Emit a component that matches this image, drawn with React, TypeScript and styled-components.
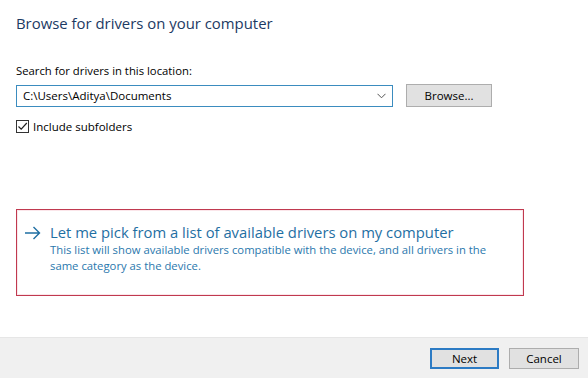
import React from "react";
import styled, { createGlobalStyle } from "styled-components";

const GlobalStyle = createGlobalStyle`
  html, body {
    margin: 0;
    padding: 0;
    background: #fff;
  }
  body {
    font-family: "Open Sans", "Noto Sans", sans-serif;
  }
`;

const Window = styled.div`
  width: 588px;
  height: 378px;
  display: flex;
  flex-direction: column;
  background: #fff;
  overflow: hidden;
`;

const Body = styled.div`
  flex: 1;
  display: flex;
  flex-direction: column;
  padding: 12px 16px 0 16px;
`;

const Title = styled.h1`
  margin: 0;
  font-size: 14.9px;
  font-weight: 400;
  color: #1c3a63;
  line-height: 22px;
`;

const Label = styled.div`
  margin-top: 29px;
  font-size: 11.3px;
  color: #000;
  line-height: 16px;
`;

const PathRow = styled.div`
  display: flex;
  align-items: center;
  gap: 13px;
  margin-top: 5px;
`;

const Combo = styled.div`
  width: 377px;
  height: 22px;
  box-sizing: border-box;
  border: 1px solid #3b8cbf;
  display: flex;
  align-items: center;
  justify-content: space-between;
  padding: 0 6px 0 6px;
  font-size: 11.5px;
  color: #000;
`;

const Button = styled.button<{ $focused?: boolean }>`
  width: ${(p) => (p.$focused ? "69px" : "70px")};
  height: 21px;
  box-sizing: border-box;
  border: ${(p) => (p.$focused ? "2px solid #2c7bc4" : "1px solid #adadad")};
  background: #e1e1e1;
  font-family: inherit;
  font-size: 11.5px;
  color: #000;
  padding: 0;
`;

const BrowseButton = styled(Button)`
  width: 86px;
  height: 23px;
`;

const CheckRow = styled.label`
  display: flex;
  align-items: center;
  gap: 4px;
  margin-top: 12px;
  font-size: 11.5px;
  color: #000;
`;

const Box = styled.span`
  width: 13px;
  height: 13px;
  box-sizing: border-box;
  border: 1px solid #333;
  display: flex;
  align-items: center;
  justify-content: center;
`;

const Option = styled.div`
  margin-top: 75px;
  width: 508px;
  height: 87px;
  box-sizing: border-box;
  border: 1px solid #c0394f;
  box-shadow: inset 0 0 0 1px #fbe6ea;
  display: flex;
  gap: 9px;
  padding: 12px 0 0 7px;
`;

const OptionText = styled.div`
  display: flex;
  flex-direction: column;
`;

const OptionTitle = styled.div`
  font-size: 14.8px;
  color: #1f6fa3;
  line-height: 20px;
`;

const OptionDesc = styled.div`
  font-size: 11.3px;
  color: #2a78ad;
  line-height: 16px;
  width: 450px;
`;

const Footer = styled.div`
  height: 41px;
  background: #f0f0f0;
  border-top: 1px solid #e6e6e6;
  display: flex;
  align-items: center;
  justify-content: flex-end;
  gap: 10px;
  padding: 0 9px 0 0;
  box-sizing: border-box;
`;

export default function App() {
  return (
    <>
      <GlobalStyle />
      <Window>
        <Body>
          <Title>Browse for drivers on your computer</Title>
          <Label>Search for drivers in this location:</Label>
          <PathRow>
            <Combo>
              <span>C:\Users\Aditya\Documents</span>
              <svg width="9" height="6" viewBox="0 0 9 6">
                <path d="M0.5 0.8 L4.5 4.8 L8.5 0.8" fill="none" stroke="#555" strokeWidth="1" />
              </svg>
            </Combo>
            <BrowseButton>Browse...</BrowseButton>
          </PathRow>
          <CheckRow>
            <Box>
              <svg width="11" height="11" viewBox="0 0 11 11">
                <path d="M1.5 5.5 L4.2 8.2 L9.8 2" fill="none" stroke="#222" strokeWidth="1.2" />
              </svg>
            </Box>
            Include subfolders
          </CheckRow>
          <Option>
            <svg width="17" height="14" viewBox="0 0 17 14" style={{ marginTop: 4 }}>
              <path d="M1 7 H15.5 M9.5 1 L15.5 7 L9.5 13" fill="none" stroke="#1f6fa3" strokeWidth="1.4" />
            </svg>
            <OptionText>
              <OptionTitle>Let me pick from a list of available drivers on my computer</OptionTitle>
              <OptionDesc>
                This list will show available drivers compatible with the device, and all drivers in the
                same category as the device.
              </OptionDesc>
            </OptionText>
          </Option>
        </Body>
        <Footer>
          <Button $focused>Next</Button>
          <Button>Cancel</Button>
        </Footer>
      </Window>
    </>
  );
}
